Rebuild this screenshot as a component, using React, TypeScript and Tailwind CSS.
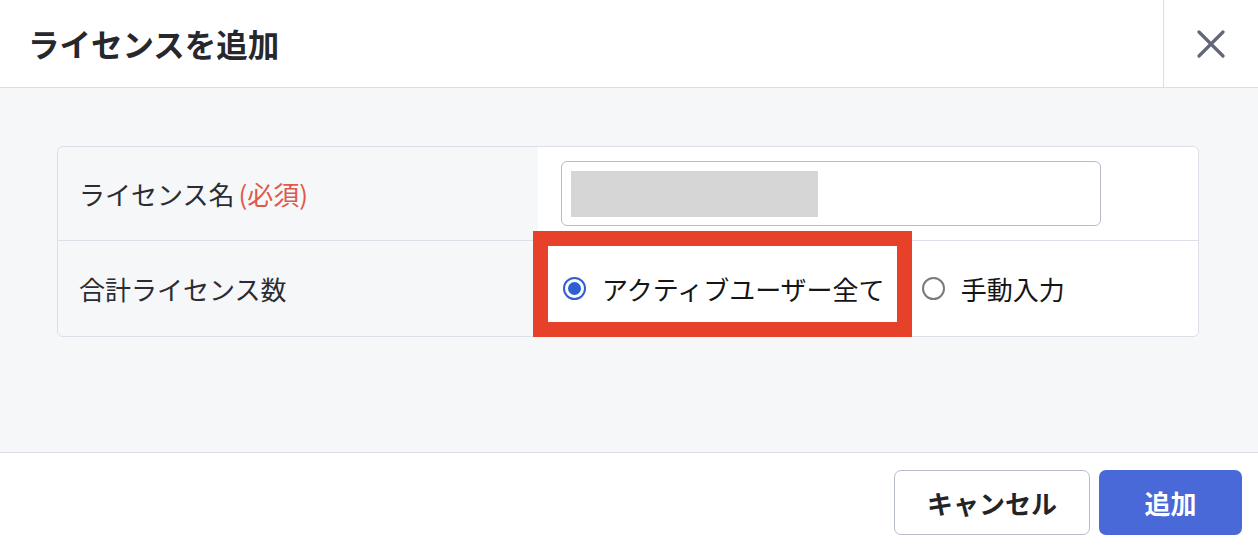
import React from "react";

const font = { fontFamily: '"Noto Sans CJK JP", "Noto Sans", sans-serif' };

function Radio({ checked, label }: { checked?: boolean; label: string }) {
  return (
    <label className="flex items-center gap-[16px] cursor-pointer">
      {checked ? (
        <span className="w-[23px] h-[23px] rounded-full border-[2px] border-[#2f5fd0] flex items-center justify-center">
          <span className="w-[13px] h-[13px] rounded-full bg-[#2f5fd0]" />
        </span>
      ) : (
        <span className="w-[23px] h-[23px] rounded-full border-[2px] border-[#7a7a7a] bg-white" />
      )}
      <span className="text-[26px] text-[#151515] leading-none">{label}</span>
    </label>
  );
}

export default function App() {
  return (
    <div className="relative w-[1258px] h-[546px] flex flex-col bg-white overflow-hidden" style={font}>
      {/* header */}
      <div className="h-[88px] flex border-b border-[#dcdee5]">
        <div className="flex-1 flex items-center pl-[28px]">
          <h1 className="text-[31.5px] font-bold text-[#27282d]">ライセンスを追加</h1>
        </div>
        <button className="w-[95px] border-l border-[#dcdee5] flex items-center justify-center">
          <svg width="28" height="28" viewBox="0 0 28 28" fill="none" stroke="#626778" strokeWidth="3.2" strokeLinecap="round">
            <path d="M2 2L26 26M26 2L2 26" />
          </svg>
        </button>
      </div>

      {/* body */}
      <div className="flex-1 bg-[#f6f7f9] pl-[57px] pr-[59px] pt-[58px]">
        <div className="border border-[#dcdfe7] rounded-[6px] overflow-hidden">
          <div className="grid grid-cols-[480px_1fr] h-[94px] border-b border-[#dcdfe7]">
            <div className="flex items-center pl-[21px] text-[26px] text-[#2b2c31]">
              ライセンス名<span className="text-[#de5a4e] ml-[4px]">(必須)</span>
            </div>
            <div className="bg-white flex items-center pl-[23px]">
              <div className="w-[540px] h-[65px] border border-[#b7bbc7] rounded-[6px] bg-white flex items-center px-[9px]">
                <div className="w-[247px] h-[46px] bg-[#d6d6d6]" />
              </div>
            </div>
          </div>
          <div className="grid grid-cols-[480px_1fr] h-[95px]">
            <div className="flex items-center pl-[21px] text-[26px] text-[#2b2c31]">合計ライセンス数</div>
            <div className="bg-white flex items-center pl-[25px] gap-[37px]">
              <Radio checked label="アクティブユーザー全て" />
              <Radio label="手動入力" />
            </div>
          </div>
        </div>
      </div>

      {/* footer */}
      <div className="h-[94px] border-t border-[#dcdee5] flex items-center justify-end pr-[16px] pt-[5px] gap-[9px]">
        <button className="w-[196px] h-[65px] border border-[#b7bcc9] rounded-[7px] bg-white text-[26px] font-bold text-[#232428]">
          キャンセル
        </button>
        <button className="w-[143px] h-[65px] rounded-[7px] bg-[#4a69d9] text-[26px] font-bold text-white">
          追加
        </button>
      </div>

      {/* annotation highlight */}
      <div className="absolute left-[533px] top-[231px] w-[379px] h-[106px] border-[15px] border-[#e8412a] pointer-events-none" />
    </div>
  );
}
